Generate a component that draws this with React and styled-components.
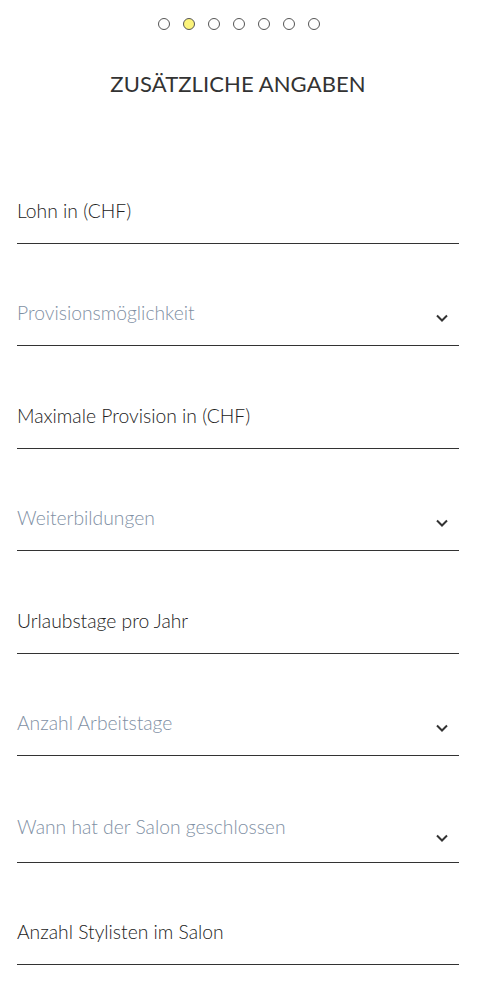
import styled, { createGlobalStyle } from "styled-components";

const GlobalStyle = createGlobalStyle`
  body {
    margin: 0;
    background: #fff;
    font-family: Lato, "Open Sans", sans-serif;
    color: #333;
  }
`;

const Page = styled.div`
  padding: 18px 18px 0 17px;
`;

const Steps = styled.div`
  display: flex;
  justify-content: center;
  gap: 13px;
  margin-left: 1px;
`;

const Dot = styled.span`
  width: 12px;
  height: 12px;
  box-sizing: border-box;
  border-radius: 50%;
  border: 1px solid #555;
  background: ${(p) => (p.$active ? "#fbf37a" : "#fff")};
`;

const Title = styled.h1`
  margin: 41px 0 0;
  text-align: center;
  font-size: 22px;
  line-height: 26px;
  font-weight: 400;
  color: #333;
  letter-spacing: 0.1px;
`;

const Form = styled.div`
  margin-top: 45px;
`;

const Field = styled.div`
  height: ${(p) => p.$height || 102}px;
  box-sizing: border-box;
  border-bottom: 1px solid #333;
  display: flex;
  align-items: flex-end;
  justify-content: space-between;
  padding-bottom: 20px;
`;

const Label = styled.span`
  font-size: 19.3px;
  line-height: 24px;
  font-weight: 300;
  margin-bottom: ${(p) => (p.$tall ? 3 : 0)}px;
  color: ${(p) => (p.$placeholder ? "#7f90a4" : "#222")};
`;

const Chevron = styled.svg`
  width: 14px;
  height: 14px;
  margin-right: 10px;
  margin-bottom: ${(p) => (p.$tall ? -3 : 0)}px;
`;

const fields = [
  { label: "Lohn in (CHF)" },
  { label: "Provisionsmöglichkeit", select: true, height: 102 },
  { label: "Maximale Provision in (CHF)", height: 103 },
  { label: "Weiterbildungen", select: true },
  { label: "Urlaubstage pro Jahr", height: 103 },
  { label: "Anzahl Arbeitstage", select: true },
  { label: "Wann hat der Salon geschlossen", select: true, height: 107, tall: true },
  { label: "Anzahl Stylisten im Salon" },
];

function Arrow({ tall }) {
  return (
    <Chevron viewBox="0 0 14 14" $tall={tall}>
      <path d="M2 4.5 L7 9.5 L12 4.5" fill="none" stroke="#333" strokeWidth="2" />
    </Chevron>
  );
}

export default function App() {
  return (
    <>
      <GlobalStyle />
      <Page>
        <Steps>
          {[0, 1, 2, 3, 4, 5, 6].map((i) => (
            <Dot key={i} $active={i === 1} />
          ))}
        </Steps>
        <Title>ZUSÄTZLICHE ANGABEN</Title>
        <Form>
          {fields.map((f) => (
            <Field key={f.label} $height={f.height}>
              <Label $placeholder={f.select} $tall={f.tall}>
                {f.label}
              </Label>
              {f.select && <Arrow tall={f.tall} />}
            </Field>
          ))}
        </Form>
      </Page>
    </>
  );
}
